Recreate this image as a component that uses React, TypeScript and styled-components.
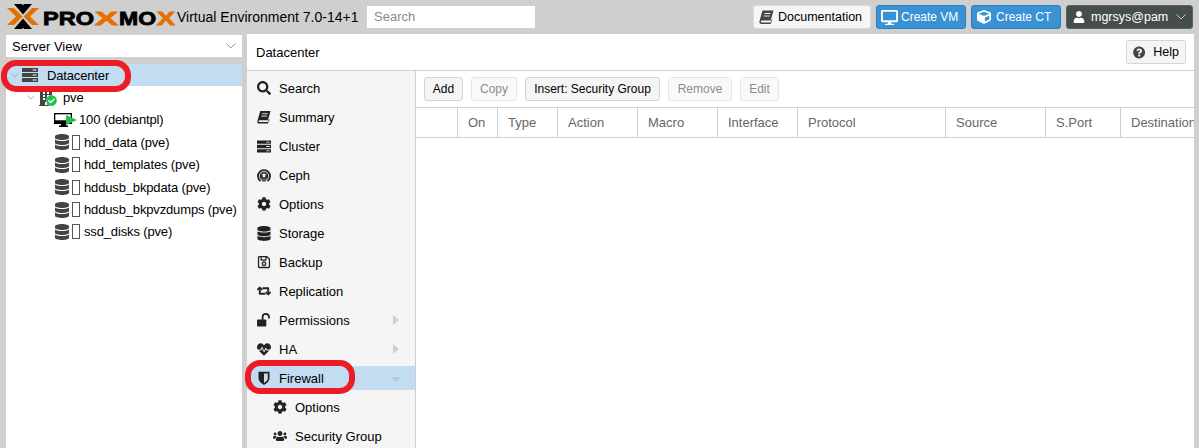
import styled, { createGlobalStyle } from 'styled-components'
import type { ReactNode } from 'react'
import {
  FaBuilding,
  FaCheckCircle,
  FaCog,
  FaCube,
  FaDatabase,
  FaDesktop,
  FaHeartbeat,
  FaQuestionCircle,
  FaRegSave,
  FaRetweet,
  FaSearch,
  FaUser,
  FaUsers,
} from 'react-icons/fa'

const GlobalStyle = createGlobalStyle`
  html, body {
    margin: 0;
    padding: 0;
    overflow: hidden;
  }
  body {
    font-family: "Liberation Sans", Arial, sans-serif;
    font-size: 13px;
    color: #000;
    background: #cfcfcf;
  }
  * { box-sizing: border-box; }
`

const Page = styled.div`
  position: relative;
  width: 1199px;
  height: 448px;
  overflow: hidden;
  background: #cfcfcf;
`

const TopBar = styled.header`
  display: flex;
  align-items: center;
  height: 34px;
  padding: 0 6px 0 7px;
`

const Logo = styled.svg`
  flex: none;
  width: 168px;
  height: 28px;
`

const Version = styled.div`
  margin-left: 2px;
  font-size: 14px;
  width: 190px;
  white-space: nowrap;
`

const SearchInput = styled.div`
  width: 168px;
  height: 22px;
  padding: 0 7px;
  line-height: 22px;
  background: #fff;
  color: #8a8a8a;
`

const TopActions = styled.div`
  display: flex;
  gap: 5px;
  margin-left: auto;
`

const TopButton = styled.div<{ $tone: 'light' | 'blue' | 'dark'; $width: number }>`
  display: flex;
  align-items: center;
  width: ${(p) => p.$width}px;
  height: 24px;
  padding: 0 3px;
  border-radius: 3px;
  white-space: nowrap;
  font-size: ${(p) => (p.$tone === 'blue' ? 12 : 12.5)}px;
  border: 1px solid
    ${(p) => (p.$tone === 'blue' ? '#2a7fbd' : p.$tone === 'dark' ? '#5c6262' : '#dcdcdc')};
  color: ${(p) => (p.$tone === 'light' ? '#000' : '#fff')};
  background: ${(p) =>
    p.$tone === 'blue' ? '#3892d4' : p.$tone === 'dark' ? '#464d4d' : '#f5f5f5'};
  svg {
    color: ${(p) => (p.$tone === 'light' ? '#444' : '#fff')};
  }
`

const TopIcon = styled.span<{ $size: number; $gap: number }>`
  display: flex;
  justify-content: center;
  flex: none;
  width: 18px;
  margin-right: ${(p) => p.$gap}px;
  font-size: ${(p) => p.$size}px;
`

const UserChevron = styled.span`
  display: flex;
  margin-left: 8px;
`

const Columns = styled.div`
  display: flex;
  height: 414px;
`

const Sidebar = styled.aside`
  display: flex;
  flex-direction: column;
  flex: none;
  width: 236px;
  margin-left: 6px;
`

const ViewSelect = styled.div`
  display: flex;
  align-items: center;
  justify-content: space-between;
  flex: none;
  height: 22px;
  margin: 1px 0 7px;
  padding: 0 6px;
  background: #fff;
`

const Tree = styled.div`
  flex: 1;
  background: #fff;
`

const TreeRow = styled.div<{ $indent: number; $selected?: boolean }>`
  display: flex;
  align-items: center;
  height: 22.4px;
  padding-left: ${(p) => p.$indent}px;
  white-space: nowrap;
  letter-spacing: -0.15px;
  background: ${(p) => (p.$selected ? '#c2ddf2' : 'transparent')};
`

const TreeIcon = styled.span<{ $width: number; $gap?: number }>`
  position: relative;
  display: flex;
  align-items: center;
  flex: none;
  width: ${(p) => p.$width}px;
  margin-left: ${(p) => p.$gap ?? 0}px;
  color: #444;
  font-size: 16px;
`

const StatusBadge = styled.span`
  position: absolute;
  left: 8px;
  top: 5px;
  display: flex;
  font-size: 11px;
  color: #21bf4b;
  background: #fff;
  border-radius: 50%;
`

const PlayBadge = styled.span`
  position: absolute;
  left: 12px;
  top: 3px;
  width: 0;
  height: 0;
  border-left: 11px solid #21bf4b;
  border-top: 5.500px solid transparent;
  border-bottom: 5.500px solid transparent;
`

const Disk = styled.span`
  flex: none;
  width: 8px;
  height: 15px;
  margin-left: 3px;
  margin-right: 4px;
  border: 1px solid #555;
  background: #fff;
`

const Main = styled.main`
  flex: none;
  width: 947px;
  margin-left: 5px;
  display: flex;
  flex-direction: column;
  background: #fff;
`

const TitleBar = styled.div`
  display: flex;
  align-items: center;
  justify-content: space-between;
  flex: none;
  height: 37px;
  padding: 0 8px 0 9px;
  border-bottom: 1px solid #cfcfcf;
`

const Body = styled.div`
  display: flex;
  flex: 1;
  min-height: 0;
`

const Nav = styled.nav`
  flex: none;
  width: 169px;
  padding-top: 5px;
  background: #f5f5f5;
  border-right: 1px solid #cfcfcf;
`

const NavItem = styled.div<{ $child?: boolean; $selected?: boolean }>`
  position: relative;
  display: flex;
  align-items: center;
  height: 24px;
  margin-bottom: 5px;
  padding-left: ${(p) => (p.$child ? 26 : 10)}px;
  background: ${(p) => (p.$selected ? '#c2ddf2' : 'transparent')};
`

const NavIcon = styled.span<{ $size?: number }>`
  display: flex;
  justify-content: center;
  flex: none;
  width: 14px;
  margin-right: 8px;
  font-size: ${(p) => p.$size ?? 14}px;
  color: #222;
`

const Arrow = styled.span<{ $open?: boolean }>`
  position: absolute;
  right: ${(p) => (p.$open ? 14 : 16)}px;
  top: ${(p) => (p.$open ? 11 : 7)}px;
  width: 0;
  height: 0;
  ${(p) =>
    p.$open
      ? `border-top: 5px solid #b4c8d8;
         border-left: 5px solid transparent;
         border-right: 5px solid transparent;`
      : `border-left: 6px solid #cfcfcf;
         border-top: 5px solid transparent;
         border-bottom: 5px solid transparent;`}
`

const Content = styled.section`
  flex: 1;
  min-width: 0;
  overflow: hidden;
`

const Toolbar = styled.div`
  display: flex;
  align-items: center;
  gap: 8px;
  height: 37px;
  padding: 0 8px;
  border-bottom: 1px solid #cfcfcf;
`

const ToolButton = styled.div<{ $disabled?: boolean; $width: number }>`
  width: ${(p) => p.$width}px;
  height: 24px;
  line-height: 22px;
  font-size: 12px;
  text-align: center;
  white-space: nowrap;
  border-radius: 3px;
  border: 1px solid ${(p) => (p.$disabled ? '#e6e6e6' : '#d4d4d4')};
  background: ${(p) => (p.$disabled ? '#f9f9f9' : '#f5f5f5')};
  color: ${(p) => (p.$disabled ? '#8c8c8c' : '#000')};
`

const HelpButton = styled(ToolButton)`
  display: flex;
  align-items: center;
  gap: 8px;
  font-size: 12.5px;
  padding: 0 6px;
  svg {
    font-size: 13px;
    color: #444;
  }
`

const HeaderRow = styled.div`
  display: flex;
  height: 30px;
  border-bottom: 1px solid #cfcfcf;
`

const HeaderCell = styled.div<{ $width: number }>`
  flex: none;
  width: ${(p) => p.$width}px;
  padding-left: 10px;
  line-height: 29px;
  color: #666;
  white-space: nowrap;
  overflow: hidden;
  border-right: 1px solid #cfcfcf;
`

const Highlight = styled.div<{ $left: number; $top: number; $width: number; $height: number }>`
  position: absolute;
  left: ${(p) => p.$left}px;
  top: ${(p) => p.$top}px;
  width: ${(p) => p.$width}px;
  height: ${(p) => p.$height}px;
  border: 6px solid #ed1c24;
  border-radius: 15px;
`

const ChevronIcon = ({ color = '#999', size = 10 }: { color?: string; size?: number }) => (
  <svg width={size} height={size / 2 + 1} viewBox="0 0 10 6" fill="none" stroke={color} strokeWidth="1">
    <path d="M.5.5 5 5 9.500.5" />
  </svg>
)

const BookIcon = () => (
  <svg width="15" height="14" viewBox="0 0 15 14">
    <path
      fill="currentColor"
      d="M3.500.5h11l-2.800 10H3c-.9 0-1.300.5-1.200 1 .1.600.6.900 1.300.9h8.700l.9-3 .9.400L11.600 14H2.500C1 14 .1 12.900.4 11.500z"
    />
    <path stroke="#fff" strokeWidth=".9" d="M5.500 3.500h6M4.800 6h6" />
  </svg>
)

const ServerIcon = ({ width = 15, height = 13 }: { width?: number; height?: number }) => (
  <svg width={width} height={height} viewBox="0 0 15 13">
    <path fill="currentColor" d="M0 0h15v3.600H0zM0 4.700h15v3.600H0zM0 9.400h15V13H0z" />
    <path fill="#fff" d="M10 1.300h3.500v1H10zM10 6h3.500v1H10zM10 10.700h3.500v1H10z" />
  </svg>
)

const CephIcon = () => (
  <svg width="15" height="16" viewBox="0 0 14 15" fill="none" stroke="currentColor">
    <path strokeWidth="1.800" d="M3.600 13.600A6 6 0 1 1 10.400 13.600" />
    <path strokeWidth="1.500" d="M4.800 11.600A3.600 3.600 0 1 1 9.200 11.600" />
    <path strokeWidth="1.500" d="M6 14V10.200A1.600 1.600 0 0 1 5.400 7.400M8 14V10.200A1.600 1.600 0 0 0 8.600 7.400" />
  </svg>
)

const UnlockIcon = () => (
  <svg width="15" height="14" viewBox="0 0 15 14">
    <rect fill="currentColor" x="0" y="6.500" width="10" height="7.500" rx="1" />
    <path fill="none" stroke="currentColor" strokeWidth="1.900" d="M6 7V3.800a3.300 3.300 0 0 1 6.800 0v1.700" />
  </svg>
)

const ShieldIcon = () => (
  <svg width="12" height="14" viewBox="0 0 12 14">
    <path
      fill="currentColor"
      fillRule="evenodd"
      d="M.5.800h11v6.500c0 3-3 5.200-5.500 6.700C3.500 12.500.5 10.300.5 7.300zM6 2.500v9.600c1.800-1.200 3.800-2.800 3.800-4.800V2.500z"
    />
  </svg>
)

const MonitorIcon = () => (
  <svg width="19" height="15" viewBox="0 0 19 15">
    <path fill="#000" d="M0 1h18v11h-6v1.500h2V15H5v-1.500h2V12H0z" />
    <path fill="#fff" d="M1.300 2.300h15.400v6H1.300z" />
  </svg>
)

const RetweetIcon = styled(FaRetweet)`
  stroke: currentColor;
  stroke-width: 24;
`

const logoText = { fontFamily: 'Liberation Sans', fontWeight: 700, fontSize: 18 }

const ProxmoxLogo = () => (
  <Logo viewBox="0 0 168 28">
    <path fill="#e57000" d="M0 5h7l8.500 8.500L7 22H0l9-8.500z" />
    <path fill="#e57000" d="M32 5h-7l-8.500 8.500L25 22h7l-9-8.500z" />
    <path fill="#000" d="M7 1h8l1 1.500L17 1h8l-9 10.500z" />
    <path fill="#000" d="M7 26h8l1-1.500 1 1.500h8l-9-10.500z" />
    <text {...logoText} x="36" y="22" textLength="51" lengthAdjust="spacingAndGlyphs" stroke="#000" strokeWidth="0.8">
      PRO
    </text>
    <text {...logoText} x="88" y="22" fill="#e57000" textLength="23" lengthAdjust="spacingAndGlyphs" stroke="#e57000" strokeWidth="0.8">
      X
    </text>
    <text {...logoText} x="112" y="22" textLength="37" lengthAdjust="spacingAndGlyphs" stroke="#000" strokeWidth="0.8">
      MO
    </text>
    <text {...logoText} x="150" y="22" fill="#e57000" textLength="18" lengthAdjust="spacingAndGlyphs" stroke="#e57000" strokeWidth="0.8">
      X
    </text>
  </Logo>
)

const storages = ['hdd_data', 'hdd_templates', 'hddusb_bkpdata', 'hddusb_bkpvzdumps', 'ssd_disks']

type NavEntry = {
  label: string
  icon: ReactNode
  size?: number
  arrow?: 'closed' | 'open'
  child?: boolean
  selected?: boolean
}

const navItems: NavEntry[] = [
  { label: 'Search', icon: <FaSearch /> },
  { label: 'Summary', icon: <BookIcon /> },
  { label: 'Cluster', icon: <ServerIcon /> },
  { label: 'Ceph', icon: <CephIcon /> },
  { label: 'Options', icon: <FaCog /> },
  { label: 'Storage', icon: <FaDatabase />, size: 15 },
  { label: 'Backup', icon: <FaRegSave /> },
  { label: 'Replication', icon: <RetweetIcon />, size: 16 },
  { label: 'Permissions', icon: <UnlockIcon />, arrow: 'closed' },
  { label: 'HA', icon: <FaHeartbeat />, size: 15, arrow: 'closed' },
  { label: 'Firewall', icon: <ShieldIcon />, arrow: 'open', selected: true },
  { label: 'Options', icon: <FaCog />, child: true },
  { label: 'Security Group', icon: <FaUsers />, size: 18, child: true },
]

const columns: [string, number][] = [
  ['', 42],
  ['On', 40],
  ['Type', 60],
  ['Action', 80],
  ['Macro', 80],
  ['Interface', 80],
  ['Protocol', 148],
  ['Source', 100],
  ['S.Port', 75],
  ['Destination', 100],
]

export default function App() {
  return (
    <Page>
      <GlobalStyle />
      <TopBar>
        <ProxmoxLogo />
        <Version>Virtual Environment 7.0-14+1</Version>
        <SearchInput>Search</SearchInput>
        <TopActions>
          <TopButton $tone="light" $width={118}>
            <TopIcon $size={14} $gap={3}>
              <BookIcon />
            </TopIcon>
            Documentation
          </TopButton>
          <TopButton $tone="blue" $width={90}>
            <TopIcon $size={17} $gap={3}>
              <FaDesktop />
            </TopIcon>
            Create VM
          </TopButton>
          <TopButton $tone="blue" $width={90}>
            <TopIcon $size={14} $gap={3}>
              <FaCube />
            </TopIcon>
            Create CT
          </TopButton>
          <TopButton $tone="dark" $width={127}>
            <TopIcon $size={12} $gap={3}>
              <FaUser />
            </TopIcon>
            mgrsys@pam
            <UserChevron>
              <ChevronIcon color="#c8c8c8" />
            </UserChevron>
          </TopButton>
        </TopActions>
      </TopBar>
      <Columns>
        <Sidebar>
          <ViewSelect>
            Server View
            <ChevronIcon />
          </ViewSelect>
          <Tree>
            <TreeRow $indent={5} $selected>
              <ChevronIcon color="#8fa3b3" size={8} />
              <TreeIcon $width={25} $gap={3}>
                <ServerIcon width={16} height={14} />
              </TreeIcon>
              Datacenter
            </TreeRow>
            <TreeRow $indent={21}>
              <ChevronIcon size={8} />
              <TreeIcon $width={25} $gap={3}>
                <FaBuilding />
                <StatusBadge>
                  <FaCheckCircle />
                </StatusBadge>
              </TreeIcon>
              pve
            </TreeRow>
            <TreeRow $indent={48}>
              <TreeIcon $width={25}>
                <MonitorIcon />
                <PlayBadge />
              </TreeIcon>
              100 (debiantpl)
            </TreeRow>
            {storages.map((name) => (
              <TreeRow $indent={49} key={name}>
                <TreeIcon $width={14}>
                  <FaDatabase />
                </TreeIcon>
                <Disk />
                {name} (pve)
              </TreeRow>
            ))}
          </Tree>
        </Sidebar>
        <Main>
          <TitleBar>
            Datacenter
            <HelpButton $width={60}>
              <FaQuestionCircle />
              Help
            </HelpButton>
          </TitleBar>
          <Body>
            <Nav>
              {navItems.map((item) => (
                <NavItem key={item.label + item.child} $child={item.child} $selected={item.selected}>
                  <NavIcon $size={item.size}>{item.icon}</NavIcon>
                  {item.label}
                  {item.arrow && <Arrow $open={item.arrow === 'open'} />}
                </NavItem>
              ))}
            </Nav>
            <Content>
              <Toolbar>
                <ToolButton $width={39}>Add</ToolButton>
                <ToolButton $width={46} $disabled>Copy</ToolButton>
                <ToolButton $width={135}>Insert: Security Group</ToolButton>
                <ToolButton $width={64} $disabled>Remove</ToolButton>
                <ToolButton $width={39} $disabled>Edit</ToolButton>
              </Toolbar>
              <HeaderRow>
                {columns.map(([label, width]) => (
                  <HeaderCell key={label} $width={width}>
                    {label}
                  </HeaderCell>
                ))}
              </HeaderRow>
            </Content>
          </Body>
        </Main>
      </Columns>
      <Highlight $left={1} $top={60} $width={130} $height={32} />
      <Highlight $left={245} $top={360} $width={110} $height={34} />
    </Page>
  )
}
